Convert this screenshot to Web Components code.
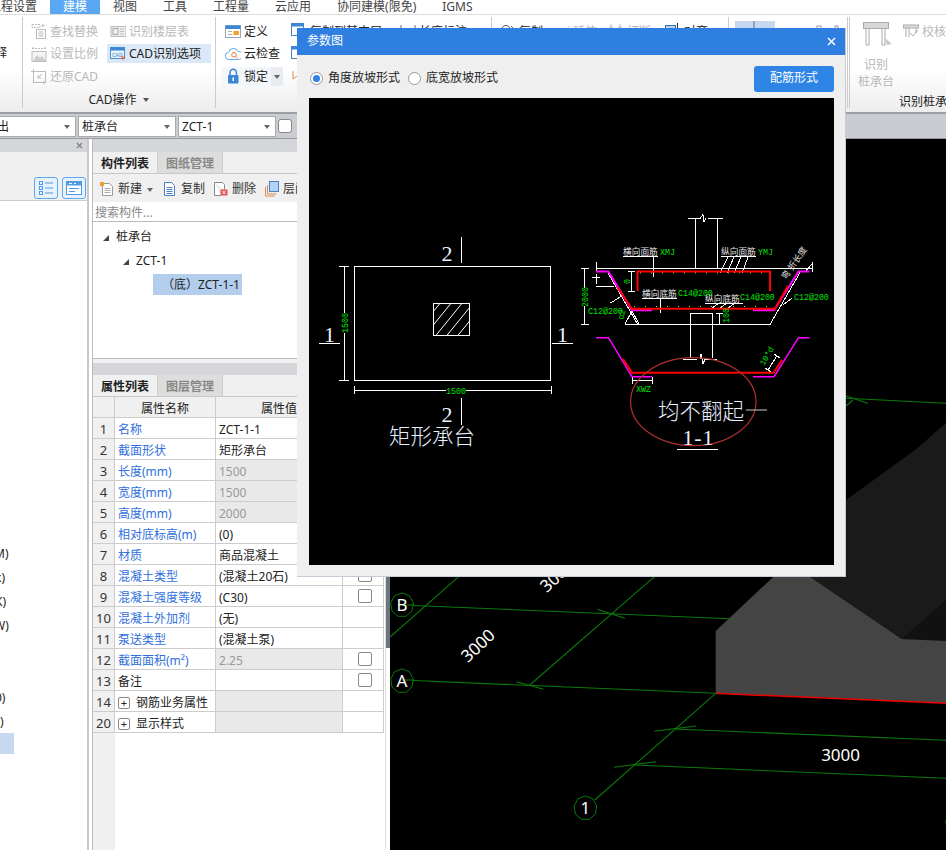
<!DOCTYPE html>
<html lang="zh">
<head>
<meta charset="utf-8">
<title>参数图</title>
<style>
  html,body{margin:0;padding:0;width:946px;height:850px;overflow:hidden;background:#fff}
  body{font:12px/1.2 "Noto Sans","Noto Sans CJK SC",sans-serif;color:#222;position:relative}
  app-shell{width:946px;height:850px}
</style>
</head>
<body>
<app-shell>
  <app-menubar></app-menubar>
  <app-ribbon>
    <rb-group width="22"><rb-item plain text="释" style="margin:42px 0 0 -5px"></rb-item></rb-group>
    <rb-group width="193" label="CAD操作" drop pad="9" cols="79px 101px">
      <rb-item icon="find" text="查找替换" disabled></rb-item>
      <rb-item icon="floor" text="识别楼层表" disabled></rb-item>
      <rb-item icon="scale" text="设置比例" disabled></rb-item>
      <rb-item icon="cad" text="CAD识别选项" active></rb-item>
      <rb-item icon="restore" text="还原CAD" disabled></rb-item>
    </rb-group>
    <rb-group width="276" pad="10" cols="66px 109px 90px">
      <rb-item icon="define" text="定义"></rb-item>
      <rb-item icon="copyfloor" text="复制到其它层"></rb-item>
      <rb-item icon="measure" text="长度标注"></rb-item>
      <rb-item icon="cloud" text="云检查"></rb-item>
      <rb-item icon="copyfloor"></rb-item>
      <rb-item></rb-item>
      <rb-item icon="lock" text="锁定" locked></rb-item>
      <rb-item icon="orange"></rb-item>
    </rb-group>
    <rb-group width="237" pad="9" cols="54px 54px 57px 60px">
      <rb-item icon="copy" text="复制"></rb-item>
      <rb-item icon="extend" text="延伸" disabled></rb-item>
      <rb-item icon="breakit" text="打断" disabled></rb-item>
      <rb-item icon="align" text="对齐"></rb-item>
    </rb-group>
    <rb-group width="119" pad="6" cols="72px 19px 19px">
      <rb-item icon="bluebox"></rb-item>
      <rb-item icon="node"></rb-item>
      <rb-item icon="node2"></rb-item>
    </rb-group>
    <rb-group width="99" label="识别桩承台" double pad="8" cols="48px 48px" labelleft="44">
      <rb-big text="识别 桩承台"></rb-big>
      <rb-item icon="check" text="校核" disabled></rb-item>
    </rb-group>
  </app-ribbon>
  <app-toolbar>
    <tb-select width="77" style="margin-left:-1px" text="输出" shift="-18"></tb-select>
    <tb-select width="98" text="桩承台"></tb-select>
    <tb-select width="98" text="ZCT-1"></tb-select>
    <tb-check></tb-check>
  </app-toolbar>
  <app-main>
    <left-panel></left-panel>
    <mid-panel></mid-panel>
    <panel-scroll></panel-scroll>
    <cad-canvas></cad-canvas>
  </app-main>
</app-shell>
<param-dialog title="参数图"><param-drawing></param-drawing></param-dialog>

<script>
// small icon set used by the ribbon and the list toolbar
const ICONS = {
  find:'<rect x="1" y="1.5" width="8" height="3" fill="none" stroke="#bbb" stroke-dasharray="2 1"/><path d="M12 1v3M10.5 2.5h3" stroke="#bbb"/><rect x="5.5" y="6.5" width="9" height="9" fill="none" stroke="#bbb"/><path d="M7.5 9h5M7.5 11h5M7.5 13h5" stroke="#bbb"/>',
  floor:'<rect x="1" y="3.5" width="15" height="10" fill="#eee" stroke="#bbb"/><rect x="3" y="5.5" width="5" height="6" fill="none" stroke="#aaa"/><path d="M10 6h4M10 8.500h4M10 11h4" stroke="#bbb"/>',
  scale:'<path d="M2 1v3M1 2.500h14M14 1v3" stroke="#bbb" fill="none" stroke-dasharray="2 1"/><rect x="1" y="5.500" width="14" height="10" fill="#f4f4f4" stroke="#bbb"/><path d="M2 15l4-6 3 3 2-2 4 5z" fill="#ccc"/>',
  restore:'<rect x="2.500" y="3.500" width="12" height="11" fill="none" stroke="#bbb"/><path d="M0 3.500h4M2.500 1v4M13 13v3M15 14.500h-4" stroke="#bbb"/><path d="M11 6L7 10M7 7v3h3" fill="none" stroke="#bbb"/>',
  cad:'<rect x=".5" y="1.500" width="14" height="11" fill="#e8f2fb" stroke="#4a90d9"/><rect x=".5" y="1.500" width="14" height="3" fill="#3b87d6"/><text x="2" y="11" font-size="5" font-family="Liberation Sans" fill="#3b87d6">CAD</text><path d="M11 9l4.500 3-2 .8-.8 2.200z" fill="#e8743b"/>',
  define:'<rect x=".5" y="2.500" width="15" height="12" fill="#fff" stroke="#9ab"/><rect x=".5" y="2.500" width="15" height="3.500" fill="#3b87d6"/><path d="M3 8.500h4M3 11.500h4" stroke="#aaa"/><rect x="8.500" y="8" width="5.500" height="4" fill="#f0a030"/>',
  cloud:'<path d="M4 13.500a3.500 3.500 0 0 1-.5-7 5 5 0 0 1 9.500-1 3.800 3.800 0 0 1 .5 8z" fill="#fff" stroke="#5aa9e6"/><circle cx="9" cy="8.800" r="2.300" fill="none" stroke="#e8743b"/><path d="M10.800 10.500l1.800 1.800" stroke="#e8743b"/>',
  lock:'<path d="M5 7V4.500a3.200 3.200 0 0 1 6.400 0V7" fill="none" stroke="#3b87d6" stroke-width="1.500"/><rect x="3" y="7" width="10.500" height="8.500" rx="1" fill="#3b87d6"/><rect x="7.500" y="9.500" width="1.500" height="3.500" fill="#fff"/>',
  copyfloor:'<rect x=".5" y=".5" width="12" height="12" fill="#fff" stroke="#4a7fc0"/><rect x=".5" y=".5" width="12" height="3" fill="#3b87d6"/>',
  orange:'<path d="M2 3v8M2 11l4-3" stroke="#d98a50" fill="none"/>',
  measure:'<path d="M1 2v12M15 2v12M3 8h10" stroke="#667" fill="none"/>',
  copy:'<circle cx="6" cy="7" r="4.500" fill="none" stroke="#555"/><path d="M11 3l2 2-2 2M11 9l2 2-2 2" stroke="#555" fill="none"/>',
  extend:'<path d="M1 9h6M10 9l5-6" stroke="#bbb" fill="none" stroke-dasharray="2 1"/>',
  breakit:'<path d="M3 1v6M12 1v6M1 4h4M10 4h4" stroke="#bbb" fill="none"/>',
  align:'<rect x=".5" y="2.500" width="10" height="9" fill="#b3d1f0" stroke="#3b6fb0"/><path d="M12.500 0v16" stroke="#333"/>',
  bluebox:'<rect x="1" y="5" width="40" height="20" fill="#c5d8f0"/><path d="M20 5v20" stroke="#5f6f80"/>',
  node:'<path d="M3 14L12 5" stroke="#bbb"/><rect x="11" y="3" width="4" height="4" fill="none" stroke="#999"/>',
  node2:'<path d="M2 11L13 5" stroke="#bbb"/><rect x="10" y="3" width="3" height="3" fill="none" stroke="#999"/><rect x="1" y="10" width="3" height="3" fill="none" stroke="#999"/>',
  check:'<rect x=".5" y="2" width="15" height="3" fill="#ddd" stroke="#aaa"/><path d="M3 5v9M6 5v9M13 5v5" stroke="#aaa" fill="none"/><path d="M7 10l3 3 5-6" stroke="#aaa" fill="none"/>',
  list:'<g fill="none" stroke="#4f9be8"><rect x="2.500" y="2.500" width="3" height="3"/><rect x="2.500" y="7.500" width="3" height="3"/><rect x="2.500" y="12.500" width="3" height="3"/><path d="M8 4h8M8 9h8M8 14h8"/></g>',
  win:'<rect x="1.500" y="2.500" width="15" height="13" fill="#fff" stroke="#4f9be8"/><rect x="1.500" y="2.500" width="15" height="4" fill="#4f9be8"/><path d="M4 4.500h3M9 4.500h2" stroke="#fff"/><path d="M4 9.500h10M4 12.500h6" stroke="#4f9be8"/>',
  neu:'<path d="M3.500 2.500h7l3 3v9h-10z" fill="#fff" stroke="#999"/><path d="M5.500 7.500h6M5.500 9.500h6M5.500 11.500h6" stroke="#aaa"/><rect x="1" y="1" width="4" height="4" fill="#f0a030"/>',
  dup:'<path d="M2.500 1.500h7l3 3v10h-10z" fill="#fff" stroke="#4a7fc0"/><path d="M4.500 6.500h6M4.500 8.500h6M4.500 10.500h6M4.500 12.500h6" stroke="#4a7fc0"/>',
  del:'<path d="M1.500 1.500h8l2 2v5M8 14.500H1.500v-13" fill="#fff" stroke="#888"/><rect x="7.500" y="8.500" width="7" height="6" fill="#e25555"/><path d="M9.500 10l3 3M12.500 10l-3 3" stroke="#fff"/>',
  layer:'<path d="M1.500 6v9h9" fill="none" stroke="#d98a50"/><path d="M3.500 4v9h9" fill="none" stroke="#d98a50"/><rect x="5.500" y=".5" width="9" height="10" fill="#b3d4f7" stroke="#4a7fc0"/>'
};
const ico = (n, w = 16, h = 16) => `<svg width="${w}" height="${h}" viewBox="0 0 ${w} ${h}" style="display:block;flex:none">${ICONS[n] || ''}</svg>`;

class BaseEl extends HTMLElement {
  constructor() { super(); this.attachShadow({mode:'open'}); }
  connectedCallback() { this.shadowRoot.innerHTML = this.markup(); }
}

class AppShell extends BaseEl {
  markup() { return `<style>:host{display:flex;flex-direction:column}</style><slot></slot>`; }
}

class AppMenubar extends BaseEl {
  markup() {
    const items = ['工程设置','建模','视图','工具','工程量','云应用','协同建模(限免)','IGMS'];
    return `<style>
      :host{display:flex;height:14px;border-bottom:1px solid #ddd;background:#fff;overflow:hidden;flex:none}
      span{padding:0 13px;line-height:13px;height:14px;color:#444;white-space:nowrap;flex:none}
      span:first-of-type{margin-left:-24px}
      .on{background:#5aa8f4;color:#fff}
    </style>${items.map((t,i)=>`<span class="${i==1?'on':''}">${t}</span>`).join('')}`;
  }
}

class AppRibbon extends BaseEl {
  markup() { return `<style>:host{display:flex;height:97px;flex:none;overflow:hidden;background:linear-gradient(#fff 55%,#ededee)}</style><slot></slot>`; }
}

class RbGroup extends BaseEl {
  markup() {
    const g = n => this.getAttribute(n);
    const label = g('label');
    return `<style>
      :host{display:flex;flex-direction:column;flex:none;box-sizing:border-box;width:${g('width')}px;position:relative;
        padding:5px 0 0 ${g('pad')||0}px;white-space:nowrap}
      :host(:not(:first-child)){background:linear-gradient(#ccc,#ccc) left 2px/1px 91px no-repeat}
      ${g('double')!==null?':host{background:linear-gradient(#ccc,#ccc) left 2px/1px 91px no-repeat,linear-gradient(#ccc,#ccc) 2px 2px/1px 91px no-repeat !important}':''}
      .grid{display:grid;grid-template-columns:${g('cols')||'auto'};grid-auto-rows:22.5px;height:68px;align-items:center}
      .lab{height:20px;line-height:20px;margin-top:2px;color:#222;
        ${g('labelleft')?`margin-left:${g('labelleft')}px;margin-top:4px`:'text-align:center;padding-right:'+(g('pad')||0)+'px'}}
      .lab i{display:inline-block;margin-left:6px;border:3.500px solid transparent;border-top:4px solid #555;border-bottom:0;vertical-align:2px}
    </style><div class="grid"><slot></slot></div>
    ${label?`<div class="lab">${label}${g('drop')!==null?'<i></i>':''}</div>`:''}`;
  }
}

class RbItem extends BaseEl {
  markup() {
    const g = n => this.getAttribute(n);
    const dis = this.hasAttribute('disabled'), act = this.hasAttribute('active'), lock = this.hasAttribute('locked');
    const wide = g('icon') === 'bluebox';
    return `<style>
      :host{display:flex;align-items:center;height:19px;white-space:nowrap;color:${dis?'#b8b8b8':'#222'};gap:3px;overflow:visible;
        ${act?'background:#dbe8f7;padding-left:3px;margin-left:-3px;':''}
        ${lock?'background:#f3f6fa;width:61px;margin-left:-3px;padding-left:3px;box-sizing:border-box;position:relative;':''}}
      i{position:absolute;right:0;top:0;width:12px;height:19px;background:#e9edf2}
      i::after{content:"";position:absolute;left:3px;top:8px;border:3px solid transparent;border-top:4px solid #666;border-bottom:0}
      span{padding-top:1px}
    </style>${g('icon')?(wide?ico('bluebox',42,30):ico(g('icon'))):''}${g('text')?`<span>${g('text')}</span>`:''}${lock?'<i></i>':''}`;
  }
}

class RbBig extends BaseEl {
  markup() {
    const [a,b] = this.getAttribute('text').split(' ');
    return `<style>
      :host{grid-row:span 3;align-self:start;display:flex;flex-direction:column;align-items:center;color:#b8b8b8;line-height:17px;width:40px;margin-left:1px}
      svg{margin:2px 0 8px 4px}
    </style><svg width="30" height="26" viewBox="0 0 30 26"><rect x=".5" y=".5" width="25" height="6" fill="#d8d8d8" stroke="#aaa"/><path d="M3 7v16h3V7M19 7v16h3V7" fill="none" stroke="#aaa"/><path d="M22 16l7 6-5 1z" fill="#c8c8c8"/></svg><span>${a}</span><span>${b}</span>`;
  }
}

class AppToolbar extends BaseEl {
  markup() { return `<style>:host{display:flex;gap:2px;box-sizing:border-box;height:27px;flex:none;background:#c9ccd0;border-top:2px solid #9c9fa3;border-bottom:1px solid #97999d;padding-top:2px;overflow:hidden}</style><slot></slot>`; }
}

class TbSelect extends BaseEl {
  markup() {
    const g = n => this.getAttribute(n);
    return `<style>
      :host{display:flex;align-items:center;box-sizing:border-box;width:${g('width')}px;height:21px;background:#fff;border:1px solid #aaa;overflow:hidden;position:relative;padding:1px 0 0 3px;flex:none;white-space:nowrap}
      span{margin-left:${g('shift')||0}px}
      i{position:absolute;right:5px;top:8px;border:3px solid transparent;border-top:4px solid #666;border-bottom:0}
    </style><span>${g('text')}</span><i></i>`;
  }
}

class TbCheck extends BaseEl {
  markup() { return `<style>:host{display:block;box-sizing:border-box;width:14px;height:14px;margin-top:3px;background:#fff;border:1px solid #888;border-radius:3px}</style>`; }
}

class AppMain extends BaseEl {
  markup() { return `<style>:host{display:flex;height:711px;flex:none;background:#fff}</style><slot></slot>`; }
}

class LeftPanel extends BaseEl {
  markup() {
    const rows = [['M)',-6],['k)',-5],['K)',-5],['W)',-6],['',0],['',0],['0)',-5],[')',0]];
    return `<style>
      :host{display:block;box-sizing:border-box;width:89px;margin-right:3px;border-right:2px solid #c8c8c8;overflow:hidden;flex:none}
      .head{height:13px;background:#d4d6d9;position:relative}
      .head svg{position:absolute;left:76px;top:3px}
      .bar{height:49px;box-sizing:border-box;background:#f0f0f0;border-bottom:1px solid #ccc;display:flex;gap:4px;padding:25px 0 0 34px}
      .bar b{display:flex;align-items:center;justify-content:center;box-sizing:border-box;width:24px;height:22px;border:1px solid #5aa9f0;border-radius:3px;background:#e8f2fc}
      .list{padding-top:339px}
      .r{height:24px;line-height:27px;white-space:nowrap;color:#222}
      .sel{display:block;height:21px;width:14px;margin-top:1px;background:#c6d9f0}
    </style>
    <div class="head"><svg width="7" height="7" viewBox="0 0 7 7"><path d="M1 1l5 5M6 1l-5 5" stroke="#888" stroke-width="1.500"/></svg></div>
    <div class="bar"><b>${ico('list',18,18)}</b><b>${ico('win',18,18)}</b></div>
    <div class="list">${rows.map(([t,m])=>`<div class="r" style="margin-left:${m}px">${t}</div>`).join('')}<div class="sel"></div></div>`;
  }
}

class MidPanel extends BaseEl {
  markup() {
    return `<style>
      :host{display:flex;flex-direction:column;box-sizing:border-box;width:294px;flex:none;border-left:1px solid #bbb;overflow:hidden;background:#fff}
      .head{height:13px;background:#d4d6d9;flex:none}
      .tree{height:136px;flex:none;border:solid #bbb;border-width:1px 0;box-sizing:content-box;position:relative;padding-top:0;background:#fff}
      .gap{height:4px;background:#f2f2f2;flex:none}
      .tb{display:flex;align-items:center;box-sizing:border-box;height:28px;padding:2px 0 0 6px;background:#f0f0f0;flex:none;white-space:nowrap;color:#333}
      .tb span{margin:0 8px 0 3px}
      .tb i{border:3px solid transparent;border-top:4px solid #666;border-bottom:0;margin:2px 9px 0 -3px}
      .search{height:19px;line-height:22px;padding-left:2px;color:#888;background:#fff;flex:none}
      .node{position:absolute;display:flex;align-items:center;white-space:nowrap;height:21px;color:#222}
      .node::before{content:"";display:block;border:solid transparent;border-width:0 0 6px 6px;border-bottom-color:#444;margin-right:7px}
      .leaf{position:absolute;left:60px;top:52px;width:89px;height:21px;line-height:21px;background:#b3cdec;padding-left:9px;box-sizing:border-box;white-space:nowrap}
    </style>
    <div class="head"></div>
    <tab-strip a="构件列表" b="图纸管理"></tab-strip>
    <div class="tb">${ico('neu')}<span>新建</span><i></i>${ico('dup')}<span>复制</span>${ico('del')}<span>删除</span>${ico('layer')}<span>层间复制</span></div>
    <div class="search">搜索构件...</div>
    <div class="tree">
      <div class="node" style="left:10px;top:5px">桩承台</div>
      <div class="node" style="left:30px;top:29px">ZCT-1</div>
      <div class="leaf">（底）ZCT-1-1</div>
    </div>
    <div class="gap"></div>
    <div class="head" style="height:12px"></div>
    <tab-strip a="属性列表" b="图层管理"></tab-strip>
    <prop-table></prop-table>`;
  }
}

class TabStrip extends BaseEl {
  markup() {
    const g = n => this.getAttribute(n);
    return `<style>
      :host{display:flex;height:22px;box-sizing:border-box;flex:none;background:#f0f0f0;border-bottom:1px solid #c8c8c8}
      b,span{width:65px;text-align:center;line-height:23px;box-sizing:border-box;height:21px}
      b{color:#222;font-weight:700;border-right:1px solid #ccc}
      span{background:#ddd;color:#888;font-weight:700;border-right:1px solid #ccc}
    </style><b>${g('a')}</b><span>${g('b')}</span>`;
  }
}

class PropTable extends BaseEl {
  markup() {
    // index, name, value, value is read only, has checkbox
    const rows = [
      [1,'名称','ZCT-1-1',0,1],[2,'截面形状','矩形承台',0,1],[3,'长度(mm)','1500',1,1],[4,'宽度(mm)','1500',1,1],
      [5,'高度(mm)','2000',1,1],[6,'相对底标高(m)','(0)',0,1],[7,'材质','商品混凝土',0,1],[8,'混凝土类型','(混凝土20石)',0,1],
      [9,'混凝土强度等级','(C30)',0,1],[10,'混凝土外加剂','(无)',0,0],[11,'泵送类型','(混凝土泵)',0,0],[12,'截面面积(m²)','2.25',1,1],
      [13,'备注','',0,1]
    ];
    const cell = (c,t) => `<div class="${c}">${t}</div>`;
    let h = cell('idx','') + cell('hd','属性名称') + cell('hd','属性值') + cell('hd','附加');
    rows.forEach(([i,n,v,ro,ck]) => {
      h += cell('idx',i) + cell('nm'+(i==13?' k':''),n) + cell('val'+(ro?' ro':''),v) + cell('ck',ck?'<u></u>':'');
    });
    [[14,'钢筋业务属性'],[20,'显示样式']].forEach(([i,n]) => {
      h += cell('idx',i) + cell('nm k',`<em>+</em>${n}`) + cell('val ro','') + cell('ck','');
    });
    return `<style>
      :host{display:grid;grid-template-columns:22px 101px 127px 41px;grid-auto-rows:21px;flex:1;align-content:start;background:linear-gradient(#f0f0f0,#f0f0f0) left/22px 100% no-repeat;white-space:nowrap}
      div{box-sizing:border-box;border:solid #ccc;border-width:0 1px 1px 0;line-height:23px;padding-left:3px;overflow:hidden}
      .idx{background:#f0f0f0;text-align:center;padding:0;font-size:13px;color:#333}
      .hd{background:#f0f0f0;text-align:center;padding:0}
      .nm{color:#2f6fdc}.k{color:#222}
      .ro{background:#e9e9e9;color:#999}
      .ck{display:flex;align-items:center;justify-content:center}
      u{display:block;box-sizing:border-box;width:14px;height:14px;background:#fff;border:1px solid #888;border-radius:2px;text-decoration:none}
      em{display:inline-flex;align-items:center;justify-content:center;box-sizing:border-box;width:12px;height:12px;border:1px solid #888;border-radius:2px;font-style:normal;font-size:11px;line-height:1;margin-right:6px;vertical-align:0}
    </style>${h}`;
  }
}

class PanelScroll extends BaseEl {
  markup() {
    return `<style>
      :host{display:block;flex:none;position:relative;margin-left:-1px;width:5px;background:#fff;border-left:1px solid #ddd;box-sizing:border-box}
      b{display:block;height:509px;background:#6b7480}
    </style><b></b>`;
  }
}

// polygon used for the axis bubbles
const ring = (cx, cy, r = 11.5, n = 9) => {
  const p = [];
  for (let i = 0; i < n; i++) {
    const a = -Math.PI / 2 + i * 2 * Math.PI / n;
    p.push((cx + r * Math.cos(a)).toFixed(1) + ',' + (cy + r * 1.05 * Math.sin(a)).toFixed(1));
  }
  return `<polygon points="${p.join(' ')}" fill="#000" stroke="#0a7a0a" stroke-width="1"/>`;
};

class CadCanvas extends BaseEl {
  markup() {
    const L = [
      [402,605,730,618.7],[597.3,609.3,624.8,618.3],[402,680,715.7,693.3],[516.5,681.7,543.5,689.3],
      [594.8,800,715.7,693.3],[529.8,685,654.4,576.7],[390,637,458.7,576.7],
      [654.4,731.3,695.9,726],[614,767.3,656.2,761.7],[674.2,729,946,740.3],[634.5,765,946,778.3],
      [846,398.3,946,403.3],[846,396,867.7,403.3],[846,406,853,400]
    ];
    return `<style>:host{display:block;flex:1;background:#000;overflow:hidden}svg{display:block}text{font-family:"Noto Sans",sans-serif;fill:#fff}</style>
    <svg width="556" height="711" viewBox="390 139 556 711">
      <polygon points="809,577 846,500 915,450 946,423 946,641 901.7,639" fill="#1a1a1a"/>
      <polygon points="901.7,639 946,600 946,641" fill="#111"/>
      <polygon points="715.7,693.3 715.7,631 773.5,576.7 809.6,576.7 901.7,639 946,641 946,703.3" fill="#444"/>
      <path d="M715.700 693.300L946 703.300" stroke="#e00" stroke-width="1.500"/>
      <g stroke="#0a7a0a" stroke-width="1.100">${L.map(l=>`<line x1="${l[0]}" y1="${l[1]}" x2="${l[2]}" y2="${l[3]}"/>`).join('')}</g>
      ${ring(402,605)}${ring(402,681)}${ring(585.4,808)}${ring(957,823)}
      <path d="M402 605h12M402 680h12" stroke="#0a7a0a"/>
      <g font-size="17" text-anchor="middle">
        <text x="402" y="611">B</text><text x="402" y="687">A</text><text x="585.400" y="814">1</text>
        <text x="840.600" y="761">3000</text>
        <text transform="translate(482 650) rotate(-43)">3000</text>
        <text transform="translate(561 580) rotate(-43)">3000</text>
      </g>
    </svg>`;
  }
}

class ParamDialog extends BaseEl {
  markup() {
    return `<style>
      :host{position:absolute;left:297px;top:28px;width:549px;height:549px;box-sizing:border-box;background:#efefef;border:solid #c5ccd6;border-width:0 1px 1px 0;display:flex;flex-direction:column;z-index:5}
      .hd{height:27px;background:#2e7fe0;color:#fff;display:flex;align-items:center;justify-content:space-between;padding:0 9px 0 10px;flex:none}
      .opt{height:43px;box-sizing:border-box;display:flex;align-items:center;padding:4px 11px 0 13px;flex:none;color:#222}
      label{display:flex;align-items:center;gap:5px;margin-right:8px;white-space:nowrap}
      .rd{box-sizing:border-box;width:13px;height:13px;border:1px solid #999;border-radius:50%;background:#fff;display:flex;align-items:center;justify-content:center}
      .rd.on::after{content:"";width:7px;height:7px;border-radius:50%;background:#2e85e6}
      button{margin-left:auto;width:80px;height:26px;border:0;border-radius:3px;background:#2e85e6;color:#fff;font:inherit;padding:0}
      .pic{margin:0 11px 0 12px;flex:1;background:#000;margin-bottom:11px;overflow:hidden}
    </style>
    <div class="hd"><span>${this.getAttribute('title')}</span><svg width="9" height="9" viewBox="0 0 9 9"><path d="M1 1l7 7M8 1l-7 7" stroke="#fff" stroke-width="1.500"/></svg></div>
    <div class="opt"><label><span class="rd on"></span>角度放坡形式</label><label><span class="rd"></span>底宽放坡形式</label><button>配筋形式</button></div>
    <div class="pic"><slot></slot></div>`;
  }
}

class ParamDrawing extends BaseEl {
  markup() {
    let hatch = '';
    for (let b = 414; b < 480; b += 11) hatch += `M${b} 335.300L${b + 26} 303.300`;
    const W = 'M461.500 237v26M461.500 398v27M319 343.500h21M552 343.500h21'
      + 'M344.500 266v47M344.500 333v47M339 266.500h10M339 380.500h10M354 390.500h92M466 390.500h85M354 386v8M551 386v8'
      // section, top
      + 'M695.500 218v50M717.500 218v50M688 218.500h12M708 218.500h15M700 218.500l3-4 1 7 2-3'
      + 'M596 268.500h216M596 262v10M812 262v10M584.500 268v20M584.500 306v18M581 268.500h8M581 324.500h8'
      + 'M608 273l29.500 51M625 324.500h145M770 324.500l30-52M596 286.500h18M592 277h8M596 274v10'
      + 'M690.500 313.500v22M712.500 313.500v22M690 313.500h23M719.500 313v11M716 313.500h7M716 324.500h7'
      + 'M631.500 271.500v20M628 271.500h7M628 291.500h7'
      + 'M623 256.500h35M653.500 256.500v20M720.500 256.500h35M720 273l8-16M727 273l7-16M734 273l7-16M742 273l6-16'
      + 'M642 298.500h35M660.500 298.500v14M705 303.500h38M712 308l7-5M720 308l7-5M728 308l7-5'
      + 'M610.500 303l13-8M625 324l7-13l7 13M783 305l9-7M805 272l7-8'
      // section, bottom
      + 'M690.500 325v33M712.500 325v33M683 359.500h14M705 359.500h12M700 359.500l1-5 2 9 2-4'
      + 'M632 380.500h20M632 377v7M652 377v7M768 370l8.500-13.500M765 368l6 4M774 354l6 4'
      + 'M677 449.500h41';
    return `<style>
      :host{display:block}
      svg{display:block}
      text{font-family:"Noto Sans","Noto Sans CJK SC",sans-serif}
      .n{font-family:"Liberation Serif",serif;font-size:22px;fill:#eaf2ff}
      .g{font-family:"Liberation Mono",monospace;font-size:8.300px;fill:#00e000}
      .c{font-size:8.700px;fill:#e6e6e6}
      .b{font-size:21.500px;fill:#e8f0ff;font-weight:300}
    </style>
    <svg width="525" height="467" viewBox="309 98 525 467">
      <defs><clipPath id="hc"><rect x="433.500" y="303.500" width="36" height="32"/></clipPath></defs>
      <g fill="none" stroke="#fff" stroke-width="1" shape-rendering="crispEdges">
        <rect x="354.500" y="266.500" width="196" height="114"/>
        <rect x="433.500" y="303.500" width="36" height="32"/>
        <path d="${W}"/>
      </g>
      <path d="${hatch}" clip-path="url(#hc)" stroke="#fff" fill="none" stroke-width="1"/>
      <g fill="none" stroke-linejoin="miter">
        <path d="M596 271.500h12.500L632 310.300h20M753 310.300h21L798.500 271.500h11" stroke="#f0f" stroke-width="2"/>
        <path d="M596 337.700h12.500L632 376.700h20M753 376.700h21L798.500 337.700h11" stroke="#f0f" stroke-width="1.500"/>
        <path d="M637.500 291v-19.500H770V291M617 287l15 21.700H775l13-23" stroke="#f00" stroke-width="2"/>
        <path d="M623 359l9 13.700H773.500l8.500-13" stroke="#f00" stroke-width="2"/>
        <path d="M640 273h128M634 306.500h140" stroke="#dd0" stroke-width="1" stroke-dasharray="1 10"/>
      </g>
      <ellipse cx="693.300" cy="401.700" rx="62.700" ry="44" fill="none" stroke="#b03030" stroke-width="1.200"/>
      <path d="M746 410h21" stroke="#ccc"/>
      <text class="n" x="447" y="261" text-anchor="middle">2</text>
      <text class="n" x="447" y="422" text-anchor="middle">2</text>
      <text class="n" x="329.500" y="342" text-anchor="middle">1</text>
      <text class="n" x="562.500" y="342" text-anchor="middle">1</text>
      <text class="n" x="698" y="445" text-anchor="middle" textLength="31">1-1</text>
      <text class="b" x="389" y="444">矩形承台</text>
      <text class="b" x="658" y="419">均不翻起</text>
      <text class="g" transform="translate(348 333) rotate(-90)">1500</text>
      <text class="g" x="446" y="394">1500</text>
      <text class="g" transform="translate(588 307) rotate(-90)">2000</text>
      <text class="c" x="623" y="255">横向面筋</text><text class="g" x="660" y="255">XMJ</text>
      <text class="c" x="721" y="255">纵向面筋</text><text class="g" x="758" y="255">YMJ</text>
      <text class="c" x="642" y="297">横向底筋</text><text class="g" x="678" y="296">C14@200</text>
      <text class="c" x="705" y="302">纵向底筋</text><text class="g" x="740" y="300">C14@200</text>
      <text class="g" x="588" y="313.500">C12@200</text>
      <text class="g" x="794" y="300">C12@200</text>
      <text class="g" transform="translate(630 284) rotate(-90)">0</text>
      <text class="g" transform="translate(729 323) rotate(-90)">100</text>
      <text class="g" transform="translate(623 320) rotate(-75)">α2</text>
      <text class="c" transform="translate(786 280) rotate(-55)">弯 折长度</text>
      <text class="g" x="636" y="391.500">XWZ</text>
      <text class="g" transform="translate(764 366) rotate(-60)">10*d</text>
    </svg>`;
  }
}

customElements.define('app-shell', AppShell);
customElements.define('app-menubar', AppMenubar);
customElements.define('app-ribbon', AppRibbon);
customElements.define('rb-group', RbGroup);
customElements.define('rb-item', RbItem);
customElements.define('rb-big', RbBig);
customElements.define('app-toolbar', AppToolbar);
customElements.define('tb-select', TbSelect);
customElements.define('tb-check', TbCheck);
customElements.define('app-main', AppMain);
customElements.define('left-panel', LeftPanel);
customElements.define('mid-panel', MidPanel);
customElements.define('tab-strip', TabStrip);
customElements.define('prop-table', PropTable);
customElements.define('panel-scroll', PanelScroll);
customElements.define('cad-canvas', CadCanvas);
customElements.define('param-dialog', ParamDialog);
customElements.define('param-drawing', ParamDrawing);
</script>
</body>
</html>
